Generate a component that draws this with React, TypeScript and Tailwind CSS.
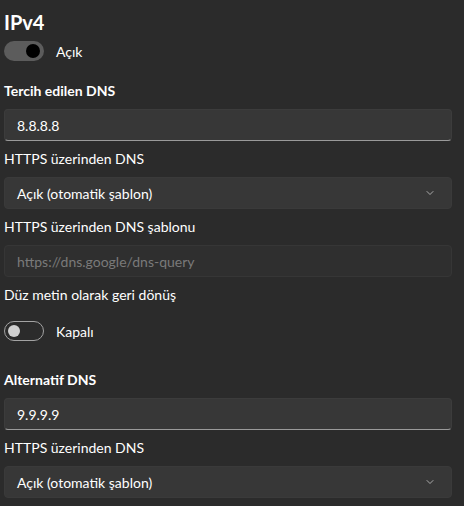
import { ChevronDown } from 'lucide-react';

function Toggle({ on, label }: { on: boolean; label: string }) {
  return (
    <div className="flex items-center gap-3 h-5">
      {on ? (
        <div className="w-10 h-5 rounded-full bg-[#5c5c5c] flex items-center justify-end pr-[4px]">
          <div className="w-[14px] h-[14px] rounded-full bg-black" />
        </div>
      ) : (
        <div className="w-10 h-5 rounded-full border border-[#a3a3a3] flex items-center pl-[3px]">
          <div className="w-3 h-3 rounded-full bg-[#d0d0d0]" />
        </div>
      )}
      <span className="text-[14px] text-[#ffffff]">{label}</span>
    </div>
  );
}

function TextBox({ value }: { value: string }) {
  return (
    <div className="h-8 rounded-[4px] bg-[#373737] border border-[#3c3c3c] border-b-[#9a9a9a] flex items-center px-3 text-[14px] text-white">
      {value}
    </div>
  );
}

function DisabledBox({ placeholder }: { placeholder: string }) {
  return (
    <div className="h-8 rounded-[4px] bg-[#2f2f2f] border border-[#363636] flex items-center px-3 text-[14px] text-[#7a7a7a]">
      {placeholder}
    </div>
  );
}

function Select({ value }: { value: string }) {
  return (
    <div className="h-8 rounded-[4px] bg-[#373737] border border-[#3a3a3a] flex items-center justify-between pl-3 pr-[15px] text-[14px] text-white">
      <span>{value}</span>
      <ChevronDown className="w-3 h-3 text-[#cfcfcf]" strokeWidth={1.5} />
    </div>
  );
}

function Label({ children, bold }: { children: string; bold?: boolean }) {
  return (
    <div className={`h-5 leading-5 text-[14px] text-white ${bold ? 'font-bold' : ''}`}>
      {children}
    </div>
  );
}

export default function App() {
  return (
    <div
      className="w-[464px] h-[506px] overflow-hidden bg-[#2b2b2b] pl-1 pr-3"
      style={{ fontFamily: '"Segoe UI", Lato, sans-serif' }}
    >
      <div className="pt-[8px] h-[30px] text-[20px] leading-7 font-bold text-white">IPv4</div>
      <div className="mt-[11px]">
        <Toggle on label="Açık" />
      </div>

      <div className="mt-5 flex flex-col gap-2">
        <Label bold>Tercih edilen DNS</Label>
        <TextBox value="8.8.8.8" />
        <Label>HTTPS üzerinden DNS</Label>
        <Select value="Açık (otomatik şablon)" />
        <Label>HTTPS üzerinden DNS şablonu</Label>
        <DisabledBox placeholder="https://dns.google/dns-query" />
        <Label>Düz metin olarak geri dönüş</Label>
      </div>
      <div className="mt-4">
        <Toggle on={false} label="Kapalı" />
      </div>

      <div className="mt-[29px] flex flex-col gap-2">
        <Label bold>Alternatif DNS</Label>
        <TextBox value="9.9.9.9" />
        <Label>HTTPS üzerinden DNS</Label>
        <Select value="Açık (otomatik şablon)" />
      </div>
    </div>
  );
}
